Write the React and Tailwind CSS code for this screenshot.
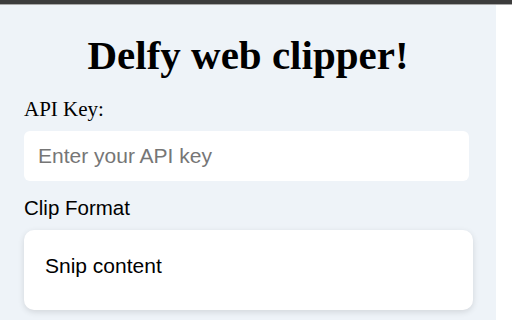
import React, { useState } from 'react';

const App = () => {
  const [apiKey, setApiKey] = useState('');

  return (
    <div className="w-[512px] h-[320px] overflow-hidden bg-white">
      <div className="h-[4px] bg-[#3c3c3c]"></div>
      <div className="h-[1px] bg-[#a8a8a8]"></div>
      <div className="w-[496px] h-[315px] bg-[#eef3f8] px-6 pt-[26px]">
        <h1 className="text-center text-[41px] leading-[48px] font-bold text-black font-['Liberation_Serif',serif]">Delfy web clipper!</h1>
        <label className="block mt-[18px] text-[21px] leading-[24px] text-black font-['Liberation_Serif',serif]">API Key:</label>
        <input
          type="text"
          value={apiKey}
          onChange={(e) => setApiKey(e.target.value)}
          placeholder="Enter your API key"
          className="mt-[10px] w-[445px] h-[50px] rounded-md bg-white px-[14px] text-[21px] text-black placeholder:text-[#767676] outline-none font-['Liberation_Sans',Arial,sans-serif]"
        />
        <div className="mt-[15px] text-[20.5px] leading-[24px] text-black font-['Liberation_Sans',Arial,sans-serif]">Clip Format</div>
        <div className="mt-[10px] w-[449px] h-[80px] rounded-[10px] bg-white shadow-[0_2px_6px_rgba(0,0,0,0.12)] px-[21px] pt-[24px] text-[21px] leading-[24px] text-black font-['Liberation_Sans',Arial,sans-serif]">
          Snip content
        </div>
      </div>
    </div>
  );
};

export default App;
